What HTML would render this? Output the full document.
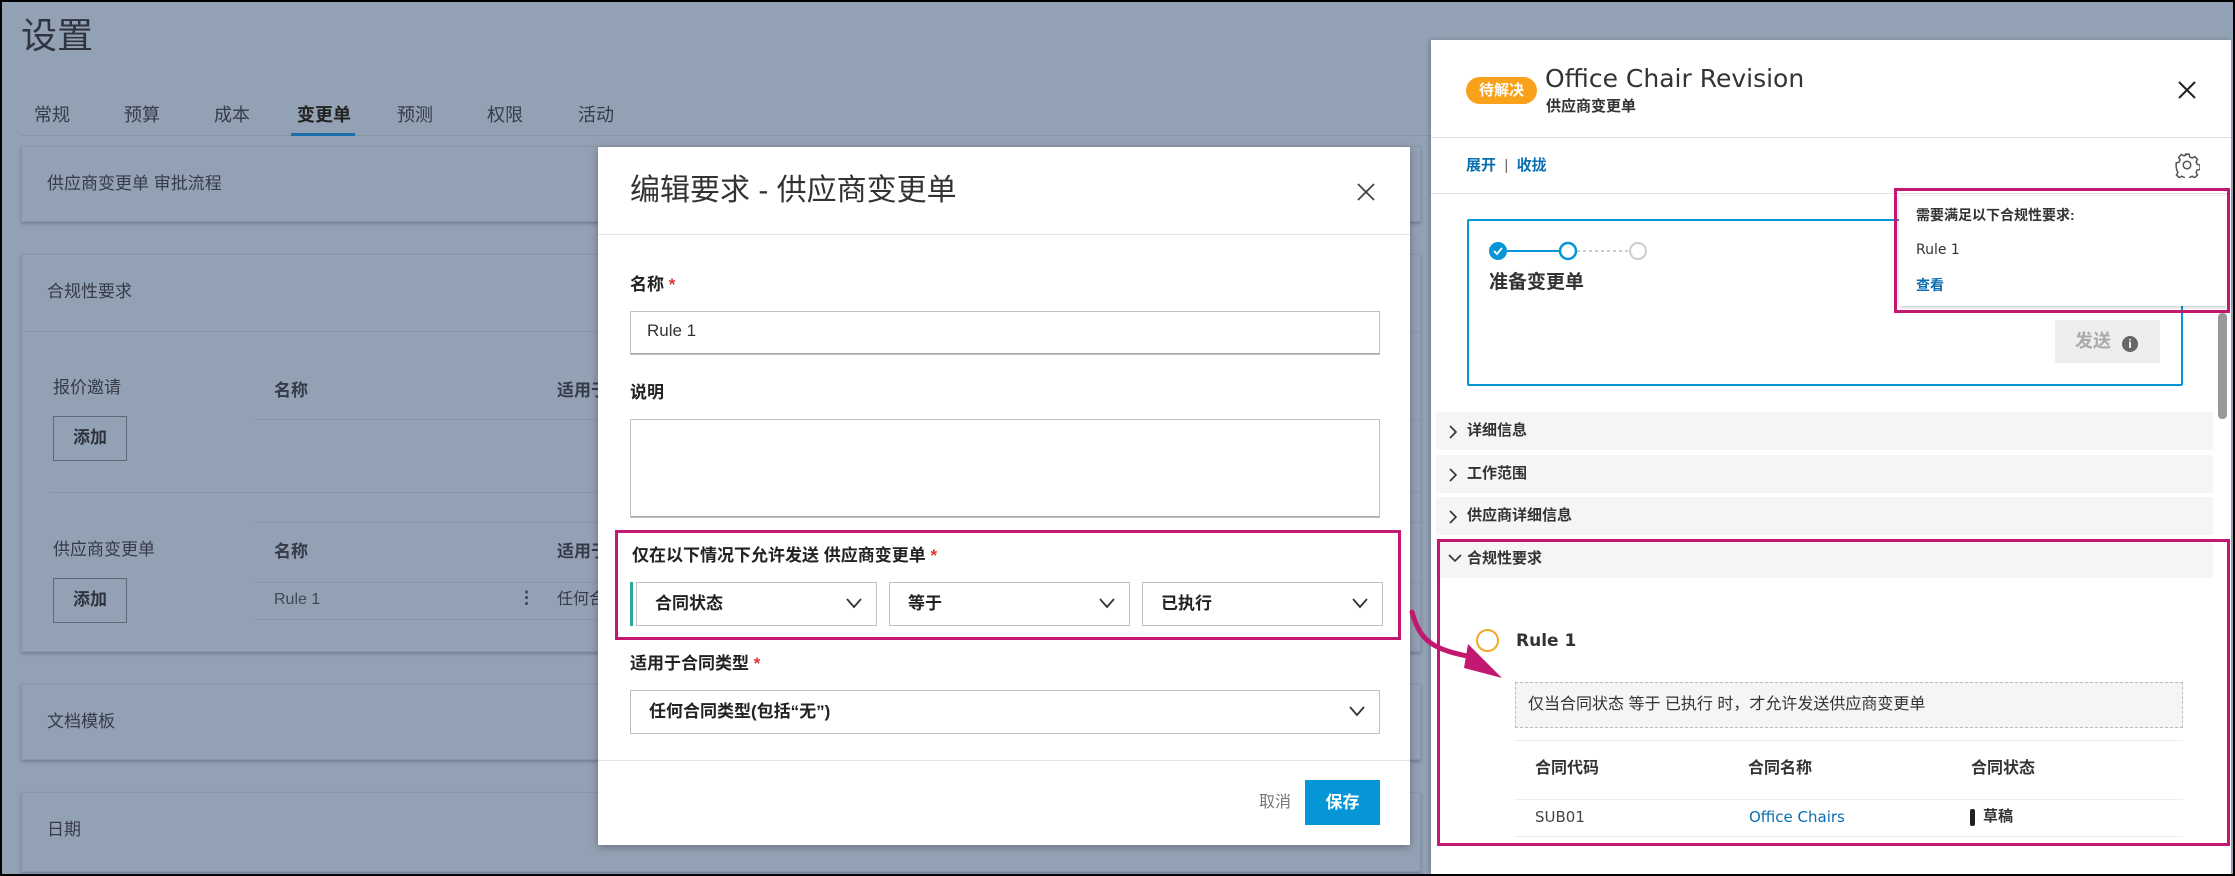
<!DOCTYPE html>
<html><head><meta charset="utf-8"><style>
*{box-sizing:border-box;margin:0;padding:0}
body{width:2235px;height:876px;overflow:hidden;background:#000;font-family:"Liberation Sans","Noto Sans CJK SC",sans-serif;position:relative}
.a{position:absolute;white-space:nowrap}
#bg{position:absolute;left:2px;top:2px;width:2231px;height:872px;background:#93a1b4}
.card{position:absolute;left:21px;width:1400px;background:#93a1b4;border:1px solid #8895a8;box-shadow:0 2px 3px rgba(60,70,90,.35)}
.dt{color:#353c48;font-size:17px;line-height:24px}
.tab{color:#353c48;font-size:18px;line-height:24px;top:103px}
.btn{position:absolute;border:1.5px solid #5f6878;width:74px;height:45px;color:#2d333d;font-size:17px;font-weight:bold;text-align:center;line-height:42px}
.hl{position:absolute;height:1px;background:#8795a8}
.modal{position:absolute;left:598px;top:147px;width:812px;height:698px;background:#fff;box-shadow:0 2px 8px rgba(0,0,0,.3)}
.lab{color:#222;font-size:17px;font-weight:bold;line-height:24px}
.inp{position:absolute;border:1px solid #bfbfbf;background:#fff;box-shadow:inset 0 -1px 0 #aaa}
.sel{position:absolute;border:1px solid #bfbfbf;background:#fff;height:44px;font-size:17px;font-weight:bold;color:#222;line-height:42px;padding-left:18px}
.chev{position:absolute;right:14px;top:14px;width:16px;height:12px}
.mag{position:absolute;border:3px solid #c2186f}
.acc{position:absolute;left:1436px;width:777px;height:38px;background:#f5f5f5;font-size:15px;font-weight:bold;color:#333;line-height:38px;padding-left:31px}
.acc svg{position:absolute;left:12px;top:13px}
</style></head><body>
<div id="bg"></div>
<div class="a" style="left:21px;top:14px;font-size:36px;line-height:44px;color:#2f3540">设置</div>
<div class="a tab" style="left:34px">常规</div>
<div class="a tab" style="left:124px">预算</div>
<div class="a tab" style="left:214px">成本</div>
<div class="a tab" style="left:297px;font-weight:bold;color:#222">变更单</div>
<div class="a tab" style="left:397px">预测</div>
<div class="a tab" style="left:487px">权限</div>
<div class="a tab" style="left:578px">活动</div>
<div class="hl" style="left:21px;top:135px;width:1410px"></div>
<div style="position:absolute;left:291px;top:133px;width:64px;height:3px;background:#1a6ea8"></div>

<div class="card" style="top:146px;height:76px"></div>
<div class="a dt" style="left:47px;top:172px">供应商变更单 审批流程</div>
<div class="card" style="top:254px;height:398px"></div>
<div class="a dt" style="left:47px;top:280px">合规性要求</div>
<div class="hl" style="left:22px;top:331px;width:1400px"></div>
<div class="a dt" style="left:53px;top:376px">报价邀请</div>
<div class="a dt" style="left:274px;top:379px;font-weight:bold">名称</div>
<div class="a dt" style="left:557px;top:379px;font-weight:bold">适用于</div>
<div class="hl" style="left:254px;top:419px;width:1170px"></div>
<div class="btn" style="left:53px;top:416px">添加</div>
<div class="hl" style="left:50px;top:492px;width:1370px"></div>
<div class="hl" style="left:254px;top:522px;width:1170px"></div>
<div class="a dt" style="left:53px;top:538px">供应商变更单</div>
<div class="a dt" style="left:274px;top:540px;font-weight:bold">名称</div>
<div class="a dt" style="left:557px;top:540px;font-weight:bold">适用于</div>
<div class="hl" style="left:254px;top:582px;width:1170px"></div>
<div class="btn" style="left:53px;top:578px">添加</div>
<div class="a dt" style="left:274px;top:588px;font-size:16px;color:#404855">Rule 1</div>
<div class="a dt" style="left:518px;top:586px;font-weight:bold">⋮</div>
<div class="a dt" style="left:557px;top:588px;font-size:16px">任何合同</div>
<div class="hl" style="left:254px;top:619px;width:1170px"></div>
<div class="card" style="top:684px;height:76px"></div>
<div class="a dt" style="left:47px;top:710px">文档模板</div>
<div class="card" style="top:792px;height:80px"></div>
<div class="a dt" style="left:47px;top:818px">日期</div>

<div class="modal">
  <div class="a" style="left:32px;top:25px;font-size:30px;line-height:38px;color:#333">编辑要求 - 供应商变更单</div>
  <svg class="a" style="left:758px;top:35px" width="20" height="20" viewBox="0 0 20 20"><path d="M2 2L18 18M18 2L2 18" stroke="#444" stroke-width="1.8"/></svg>
  <div class="hl" style="left:0;top:87px;width:812px;background:#e3e3e3"></div>
  <div class="a lab" style="left:32px;top:126px">名称 <span style="color:#d33">*</span></div>
  <div class="inp" style="left:32px;top:164px;width:750px;height:44px"><span class="a" style="left:16px;top:9px;font-size:17px;color:#333">Rule 1</span></div>
  <div class="a lab" style="left:32px;top:234px">说明</div>
  <div class="inp" style="left:32px;top:272px;width:750px;height:99px"></div>
  <div class="a lab" style="left:34px;top:397px">仅在以下情况下允许发送 供应商变更单 <span style="color:#d33">*</span></div>
  <div style="position:absolute;left:32px;top:435px;width:3px;height:44px;background:#2ba89a"></div>
  <div class="sel" style="left:38px;top:435px;width:241px">合同状态<svg class="chev" viewBox="0 0 16 12"><path d="M1 2L8 10L15 2" fill="none" stroke="#333" stroke-width="1.8"/></svg></div>
  <div class="sel" style="left:291px;top:435px;width:241px">等于<svg class="chev" viewBox="0 0 16 12"><path d="M1 2L8 10L15 2" fill="none" stroke="#333" stroke-width="1.8"/></svg></div>
  <div class="sel" style="left:544px;top:435px;width:241px">已执行<svg class="chev" viewBox="0 0 16 12"><path d="M1 2L8 10L15 2" fill="none" stroke="#333" stroke-width="1.8"/></svg></div>
  <div class="a lab" style="left:32px;top:505px">适用于合同类型 <span style="color:#d33">*</span></div>
  <div class="sel" style="left:32px;top:543px;width:750px">任何合同类型(包括“无”)<svg class="chev" viewBox="0 0 16 12"><path d="M1 2L8 10L15 2" fill="none" stroke="#333" stroke-width="1.8"/></svg></div>
  <div class="hl" style="left:0;top:613px;width:812px;background:#e3e3e3"></div>
  <div class="a" style="left:661px;top:645px;font-size:16px;color:#777;line-height:22px">取消</div>
  <div style="position:absolute;left:707px;top:633px;width:75px;height:45px;background:#0696d7;color:#fff;font-weight:bold;font-size:17px;text-align:center;line-height:45px">保存</div>
</div>
<div class="mag" style="left:615px;top:530px;width:786px;height:110px"></div>

<!-- right panel -->
<div style="position:absolute;left:1431px;top:40px;width:800px;height:834px;background:#fff;box-shadow:-2px 0 4px rgba(0,0,0,.2)"></div>
<div class="a" style="left:1466px;top:77px;width:71px;height:27px;border-radius:14px;background:#f9a11b;color:#fff;font-size:15px;font-weight:bold;text-align:center;line-height:27px">待解决</div>
<div class="a" style="left:1545px;top:62px;font-size:25px;line-height:34px;color:#333;font-family:'DejaVu Sans','Liberation Sans',sans-serif">Office Chair Revision</div>
<div class="a" style="left:1546px;top:97px;font-size:15px;line-height:20px;color:#333;font-weight:bold">供应商变更单</div>
<svg class="a" style="left:2178px;top:81px" width="18" height="18" viewBox="0 0 18 18"><path d="M1 1L17 17M17 1L1 17" stroke="#222" stroke-width="2"/></svg>
<div class="hl" style="left:1431px;top:137px;width:800px;background:#e0e0e0"></div>
<div class="a" style="left:1466px;top:155px;font-size:15px;line-height:22px;color:#0a6eb0;font-weight:bold">展开 <span style="color:#666;font-weight:normal">&nbsp;|&nbsp;</span> 收拢</div>
<svg class="a" style="left:2174px;top:152px" width="26" height="26" viewBox="0 0 24 24"><path d="M10 2h4l.6 2.6 2.2 1 2.4-1.3 2.5 2.5-1.3 2.4 1 2.2 2.6.6v4l-2.6.6-1 2.2 1.3 2.4-2.5 2.5-2.4-1.3-2.2 1-.6 2.6h-4l-.6-2.6-2.2-1-2.4 1.3-2.5-2.5 1.3-2.4-1-2.2L2 14v-4l2.6-.6 1-2.2-1.3-2.4 2.5-2.5 2.4 1.3 2.2-1z" fill="none" stroke="#555" stroke-width="1.4"/><circle cx="12" cy="12" r="3.5" fill="none" stroke="#555" stroke-width="1.4"/></svg>
<div class="hl" style="left:1431px;top:193px;width:800px;background:#e0e0e0"></div>
<div style="position:absolute;left:1467px;top:219px;width:716px;height:167px;border:2px solid #0696d7;border-radius:2px"></div>
<svg class="a" style="left:1485px;top:238px" width="170" height="26" viewBox="0 0 170 26"><line x1="13" y1="13" x2="83" y2="13" stroke="#0696d7" stroke-width="2"/><line x1="92" y1="13" x2="145" y2="13" stroke="#ccc" stroke-width="2" stroke-dasharray="3 3"/><circle cx="13" cy="13" r="9" fill="#0696d7"/><path d="M9 13l3 3 5-6" fill="none" stroke="#fff" stroke-width="1.8"/><circle cx="83" cy="13" r="8" fill="#fff" stroke="#0696d7" stroke-width="2.5"/><circle cx="153" cy="13" r="8" fill="#fff" stroke="#ccc" stroke-width="2"/></svg>
<div class="a" style="left:1489px;top:270px;font-size:19px;font-weight:bold;line-height:26px;color:#333">准备变更单</div>
<div class="a" style="left:2055px;top:320px;width:105px;height:43px;background:#eee;color:#aaa;font-size:18px;line-height:43px;padding-left:20px;font-weight:bold">发送 <span style="display:inline-block;width:16px;height:16px;border-radius:50%;background:#666;color:#fff;font-size:12px;line-height:16px;text-align:center;vertical-align:-1px;margin-left:6px">i</span></div>
<div class="a" style="left:1899px;top:196px;width:330px;height:110px;background:#fff;box-shadow:0 1px 4px rgba(0,0,0,.25)"></div>
<div class="a" style="left:1916px;top:205px;font-size:14px;line-height:20px;color:#333;font-weight:bold">需要满足以下合规性要求:</div>
<div class="a" style="left:1916px;top:240px;font-size:14px;line-height:20px;color:#333;font-family:'DejaVu Sans',sans-serif">Rule 1</div>
<div class="a" style="left:1916px;top:275px;font-size:14px;line-height:20px;color:#0a6eb0;font-weight:bold">查看</div>
<div class="mag" style="left:1894px;top:188px;width:336px;height:125px"></div>
<div class="a" style="left:2218px;top:313px;width:9px;height:106px;background:#999;border-radius:4px"></div>
<div class="acc" style="top:412px"><svg width="10" height="14" viewBox="0 0 10 14"><path d="M2 1l6 6-6 6" fill="none" stroke="#333" stroke-width="1.6"/></svg>详细信息</div>
<div class="acc" style="top:455px"><svg width="10" height="14" viewBox="0 0 10 14"><path d="M2 1l6 6-6 6" fill="none" stroke="#333" stroke-width="1.6"/></svg>工作范围</div>
<div class="acc" style="top:497px"><svg width="10" height="14" viewBox="0 0 10 14"><path d="M2 1l6 6-6 6" fill="none" stroke="#333" stroke-width="1.6"/></svg>供应商详细信息</div>
<div class="acc" style="top:540px"><svg width="14" height="10" viewBox="0 0 14 10"><path d="M1 2l6 6 6-6" fill="none" stroke="#333" stroke-width="1.6"/></svg>合规性要求</div>
<div class="a" style="left:1476px;top:629px;width:23px;height:23px;border:2px solid #f5a623;border-radius:50%"></div>
<div class="a" style="left:1516px;top:629px;font-size:17px;line-height:24px;color:#333;font-weight:bold;font-family:'DejaVu Sans','Noto Sans CJK SC',sans-serif">Rule 1</div>
<div class="a" style="left:1515px;top:682px;width:668px;height:46px;border:1px dashed #bbb;background:#f5f5f5;font-size:16px;line-height:44px;padding-left:12px;color:#333">仅当合同状态 等于 已执行 时，才允许发送供应商变更单</div>
<div class="hl" style="left:1515px;top:740px;width:668px;background:#eee"></div>
<div class="a" style="left:1535px;top:758px;font-size:16px;line-height:22px;color:#333;font-weight:bold">合同代码</div>
<div class="a" style="left:1748px;top:758px;font-size:16px;line-height:22px;color:#333;font-weight:bold">合同名称</div>
<div class="a" style="left:1971px;top:758px;font-size:16px;line-height:22px;color:#333;font-weight:bold">合同状态</div>
<div class="hl" style="left:1515px;top:799px;width:668px;background:#eee"></div>
<div class="a" style="left:1535px;top:807px;font-size:15px;line-height:20px;color:#444;font-family:'DejaVu Sans',sans-serif">SUB01</div>
<div class="a" style="left:1749px;top:807px;font-size:15px;line-height:20px;color:#0a6eb0;font-family:'DejaVu Sans',sans-serif">Office Chairs</div>
<div class="a" style="left:1970px;top:809px;width:5px;height:17px;background:#222;border-radius:2px"></div>
<div class="a" style="left:1983px;top:806px;font-size:15px;line-height:22px;color:#333;font-weight:bold">草稿</div>
<div class="hl" style="left:1515px;top:836px;width:668px;background:#eee"></div>
<div class="mag" style="left:1437px;top:539px;width:793px;height:307px"></div>
<svg class="a" style="left:1400px;top:600px" width="110" height="85" viewBox="0 0 110 85"><path d="M12 12C20 40 30 50 78 58" fill="none" stroke="#c2186f" stroke-width="5" stroke-linecap="round"/><path d="M68 44L102 78L64 68Z" fill="#c2186f"/></svg>
</body></html>
